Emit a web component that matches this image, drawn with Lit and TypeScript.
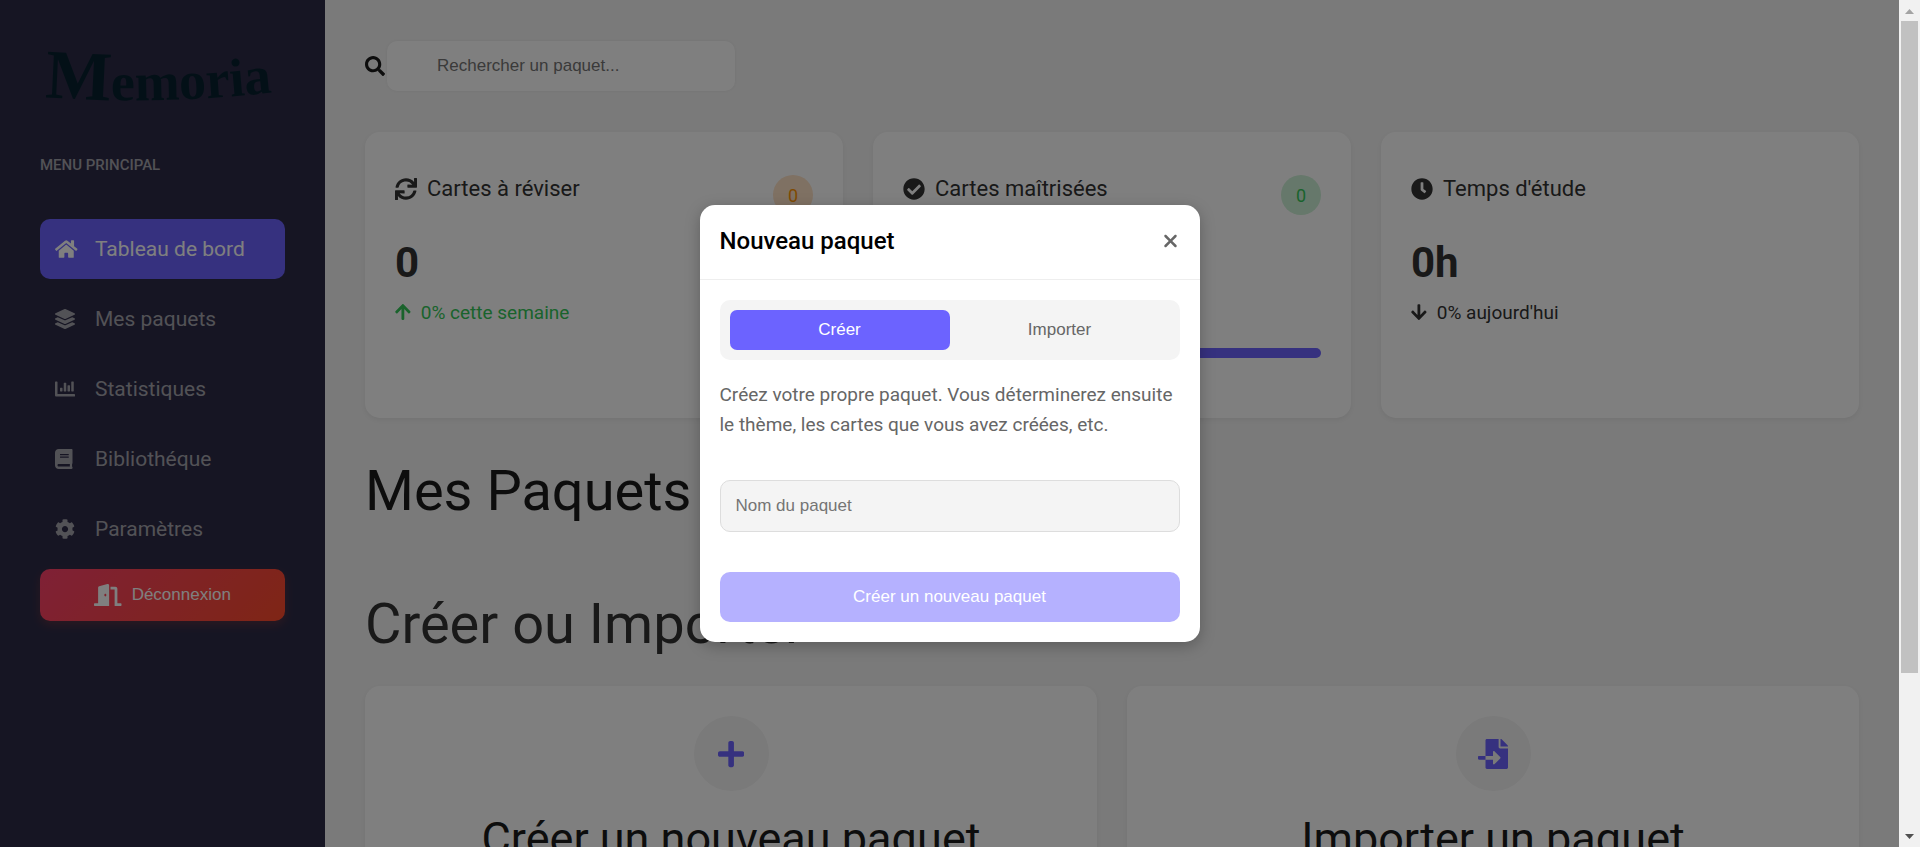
import { LitElement, html, svg, css } from "lit";
import { customElement, property, state } from "lit/decorators.js";
import { classMap } from "lit/directives/class-map.js";

interface Glyph {
  w: number;
  d: string;
}

const GLYPHS: Record<string, Glyph> = {
  home: { w: 576, d: "M280.37 148.26L96 300.11V464a16 16 0 0 0 16 16l112.06-.29a16 16 0 0 0 15.92-16V368a16 16 0 0 1 16-16h64a16 16 0 0 1 16 16v95.64a16 16 0 0 0 16 16.05L464 480a16 16 0 0 0 16-16V300L295.67 148.26a12.19 12.19 0 0 0-15.3 0zM571.6 251.47L488 182.56V44.05a12 12 0 0 0-12-12h-56a12 12 0 0 0-12 12v72.61L318.47 43a48 48 0 0 0-61 0L4.34 251.47a12 12 0 0 0-1.6 16.9l25.5 31A12 12 0 0 0 45.15 301l235.22-193.74a12.19 12.19 0 0 1 15.3 0L530.9 301a12 12 0 0 0 16.9-1.6l25.5-31a12 12 0 0 0-1.7-16.93z" },
  layers: { w: 512, d: "M12.41 148.02l232.94 105.67c6.8 3.09 14.49 3.09 21.29 0l232.94-105.67c16.55-7.51 16.55-32.52 0-40.03L266.65 2.31a25.607 25.607 0 0 0-21.29 0L12.41 107.98c-16.55 7.51-16.55 32.53 0 40.04zm487.18 88.28l-58.09-26.33-161.64 73.27c-7.56 3.43-15.59 5.17-23.86 5.17s-16.29-1.74-23.86-5.17L70.51 209.97l-58.1 26.33c-16.55 7.5-16.55 32.5 0 40l232.94 105.59c6.8 3.08 14.49 3.08 21.29 0L499.59 276.3c16.55-7.5 16.55-32.5 0-40zm0 127.8l-57.87-26.23-161.86 73.37c-7.56 3.43-15.59 5.17-23.86 5.17s-16.29-1.74-23.86-5.17L70.29 337.87 12.41 364.1c-16.55 7.5-16.55 32.5 0 40l232.94 105.59c6.8 3.08 14.49 3.08 21.29 0L499.59 404.1c16.55-7.5 16.55-32.5 0-40z" },
  chart: { w: 512, d: "M332.8 320h38.4c6.4 0 12.8-6.4 12.8-12.8V172.8c0-6.4-6.4-12.8-12.8-12.8h-38.4c-6.4 0-12.8 6.4-12.8 12.8v134.4c0 6.4 6.4 12.8 12.8 12.8zm96 0h38.4c6.4 0 12.8-6.4 12.8-12.8V76.8c0-6.4-6.4-12.8-12.8-12.8h-38.4c-6.4 0-12.8 6.4-12.8 12.8v230.4c0 6.4 6.4 12.8 12.8 12.8zm-288 0h38.4c6.4 0 12.8-6.4 12.8-12.8v-70.4c0-6.4-6.4-12.8-12.8-12.8h-38.4c-6.4 0-12.8 6.4-12.8 12.8v70.4c0 6.4 6.4 12.8 12.8 12.8zm96 0h38.4c6.4 0 12.8-6.4 12.8-12.8V108.8c0-6.4-6.4-12.8-12.8-12.8h-38.4c-6.4 0-12.8 6.4-12.8 12.8v198.4c0 6.4 6.4 12.8 12.8 12.8zM496 384H64V80c0-8.84-7.16-16-16-16H16C7.16 64 0 71.16 0 80v336c0 17.67 14.33 32 32 32h464c8.84 0 16-7.16 16-16v-32c0-8.84-7.16-16-16-16z" },
  book: { w: 448, d: "M448 360V24c0-13.3-10.7-24-24-24H96C43 0 0 43 0 96v320c0 53 43 96 96 96h328c13.3 0 24-10.7 24-24v-16c0-7.5-3.5-14.3-8.9-18.7-4.2-15.4-4.2-59.3 0-74.7 5.4-4.3 8.9-11.1 8.9-18.6zM128 134c0-3.3 2.7-6 6-6h212c3.3 0 6 2.7 6 6v20c0 3.3-2.7 6-6 6H134c-3.3 0-6-2.7-6-6v-20zm0 64c0-3.3 2.7-6 6-6h212c3.3 0 6 2.7 6 6v20c0 3.3-2.7 6-6 6H134c-3.3 0-6-2.7-6-6v-20zm253.4 250H96c-17.7 0-32-14.3-32-32 0-17.6 14.4-32 32-32h285.4c-1.9 17.1-1.9 46.9 0 64z" },
  cog: { w: 512, d: "M487.4 315.7l-42.6-24.6c4.3-23.2 4.3-47 0-70.2l42.6-24.6c4.9-2.8 7.1-8.6 5.5-14-11.1-35.6-30-67.8-54.7-94.6-3.8-4.1-10-5.1-14.8-2.3L380.8 110c-17.9-15.4-38.5-27.3-60.8-35.1V25.8c0-5.6-3.9-10.5-9.4-11.7-36.7-8.2-74.3-7.8-109.2 0-5.5 1.2-9.4 6.1-9.4 11.7V75c-22.2 7.9-42.8 19.8-60.8 35.1L88.7 85.5c-4.9-2.8-11-1.9-14.8 2.3-24.7 26.7-43.6 58.9-54.7 94.6-1.7 5.4.6 11.2 5.5 14L67.3 221c-4.3 23.2-4.3 47 0 70.2l-42.6 24.6c-4.9 2.8-7.1 8.6-5.5 14 11.1 35.6 30 67.8 54.7 94.6 3.8 4.1 10 5.1 14.8 2.3l42.6-24.6c17.9 15.4 38.5 27.3 60.8 35.1v49.2c0 5.6 3.9 10.5 9.4 11.7 36.7 8.2 74.3 7.8 109.2 0 5.5-1.2 9.4-6.1 9.4-11.7v-49.2c22.2-7.9 42.8-19.8 60.8-35.1l42.6 24.6c4.9 2.8 11 1.9 14.8-2.3 24.7-26.7 43.6-58.9 54.7-94.6 1.5-5.5-.7-11.3-5.6-14.1zM256 336c-44.1 0-80-35.9-80-80s35.9-80 80-80 80 35.9 80 80-35.9 80-80 80z" },
  door: { w: 640, d: "M624 448h-80V113.45C544 86.19 522.47 64 496 64H384v64h96v384h144c8.84 0 16-7.16 16-16v-32c0-8.84-7.16-16-16-16zM312.24 1.01l-192 49.74C105.99 54.44 96 67.7 96 82.92V448H16c-8.84 0-16 7.16-16 16v32c0 8.84 7.16 16 16 16h336V33.18c0-21.58-19.56-37.41-39.76-32.17zM264 288c-13.25 0-24-14.33-24-32s10.75-32 24-32 24 14.33 24 32-10.75 32-24 32z" },
  search: { w: 512, d: "M505 442.7L405.3 343c-4.5-4.5-10.6-7-17-7H372c27.6-35.3 44-79.7 44-128C416 93.1 322.9 0 208 0S0 93.1 0 208s93.1 208 208 208c48.3 0 92.7-16.4 128-44v16.3c0 6.4 2.5 12.5 7 17l99.7 99.7c9.4 9.4 24.6 9.4 33.9 0l28.3-28.3c9.4-9.4 9.4-24.6.1-34zM208 336c-70.7 0-128-57.2-128-128 0-70.7 57.2-128 128-128 70.7 0 128 57.2 128 128 0 70.7-57.2 128-128 128z" },
  sync: { w: 512, d: "M440.65 12.57l4 82.77A247.16 247.16 0 0 0 255.83 8C134.73 8 33.91 94.92 12.29 209.82A12 12 0 0 0 24.09 224h49.05a12 12 0 0 0 11.67-9.26 175.91 175.91 0 0 1 317-56.94l-101.46-4.86a12 12 0 0 0-12.57 12v47.41a12 12 0 0 0 12 12H500a12 12 0 0 0 12-12V12a12 12 0 0 0-12-12h-47.37a12 12 0 0 0-11.98 12.57zM255.83 432a175.61 175.61 0 0 1-146-77.8l101.8 4.87a12 12 0 0 0 12.57-12v-47.4a12 12 0 0 0-12-12H12a12 12 0 0 0-12 12V500a12 12 0 0 0 12 12h47.35a12 12 0 0 0 12-12.6l-4.15-82.57A247.17 247.17 0 0 0 255.83 504c121.11 0 221.93-86.92 243.55-201.82a12 12 0 0 0-11.8-14.18h-49.05a12 12 0 0 0-11.67 9.26A175.86 175.86 0 0 1 255.83 432z" },
  check: { w: 512, d: "M504 256c0 136.967-111.033 248-248 248S8 392.967 8 256 119.033 8 256 8s248 111.033 248 248zM227.314 387.314l184-184c6.248-6.248 6.248-16.379 0-22.627l-22.627-22.627c-6.248-6.249-16.379-6.249-22.628 0L216 308.118l-70.059-70.059c-6.248-6.248-16.379-6.248-22.628 0l-22.627 22.627c-6.248 6.248-6.248 16.379 0 22.627l104 104c6.249 6.249 16.379 6.249 22.628.001z" },
  clock: { w: 512, d: "M256,8C119,8,8,119,8,256S119,504,256,504,504,393,504,256,393,8,256,8Zm92.49,313h0l-20,25a16,16,0,0,1-22.49,2.5h0l-67-49.72a40,40,0,0,1-15-31.23V112a16,16,0,0,1,16-16h32a16,16,0,0,1,16,16V256l58,42.5A16,16,0,0,1,348.49,321Z" },
  up: { w: 448, d: "M34.9 289.5l-22.2-22.2c-9.4-9.4-9.4-24.6 0-33.9L207 39c9.4-9.4 24.6-9.4 33.9 0l194.3 194.3c9.4 9.4 9.4 24.6 0 33.9L413 289.4c-9.5 9.5-25 9.3-34.3-.4L264 168.6V456c0 13.3-10.7 24-24 24h-32c-13.3 0-24-10.7-24-24V168.6L69.2 289.1c-9.3 9.8-24.8 10-34.3.4z" },
  down: { w: 448, d: "M413.1 222.5l22.2 22.2c9.4 9.4 9.4 24.6 0 33.9L241 473c-9.4 9.4-24.6 9.4-33.9 0L12.7 278.6c-9.4-9.4-9.4-24.6 0-33.9l22.2-22.2c9.5-9.5 25-9.3 34.3.4L184 343.4V56c0-13.3 10.7-24 24-24h32c13.3 0 24 10.7 24 24v287.4l114.8-120.5c9.3-9.8 24.8-10 34.3-.4z" },
  plus: { w: 448, d: "M416 208H272V64c0-17.67-14.33-32-32-32h-32c-17.67 0-32 14.33-32 32v144H32c-17.67 0-32 14.33-32 32v32c0 17.67 14.33 32 32 32h144v144c0 17.67 14.33 32 32 32h32c17.67 0 32-14.33 32-32V304h144c17.67 0 32-14.33 32-32v-32c0-17.67-14.33-32-32-32z" },
  fileImport: { w: 512, d: "M16 288c-8.8 0-16 7.2-16 16v32c0 8.8 7.2 16 16 16h112v-64zm489-183L407.1 7c-4.5-4.5-10.6-7-17-7H384v128h128v-6.1c0-6.3-2.5-12.4-7-16.9zm-153 31V0H152c-13.3 0-24 10.7-24 24v264h128v-65.2c0-14.3 17.3-21.4 27.4-11.3L379 308c6.6 6.7 6.6 17.4 0 24l-95.7 96.4c-10.1 10.1-27.4 3-27.4-11.3V352H128v136c0 13.3 10.7 24 24 24h336c13.3 0 24-10.7 24-24V160H376c-13.2 0-24-10.8-24-24z" },
  times: { w: 384, d: "M342.6 150.6c12.5-12.5 12.5-32.8 0-45.3s-32.8-12.5-45.3 0L192 210.7 86.6 105.4c-12.5-12.5-32.8-12.5-45.3 0s-12.5 32.8 0 45.3L146.7 256 41.4 361.4c-12.5 12.5-12.5 32.8 0 45.3s32.8 12.5 45.3 0L192 301.3 297.4 406.6c12.5 12.5 32.8 12.5 45.3 0s12.5-32.8 0-45.3L237.3 256 342.6 150.6z" },
};

/** Monochrome icon, as tall as the surrounding font size. */
@customElement("app-icon")
export class AppIcon extends LitElement {
  @property() name = "home";

  static styles = css`
    :host {
      display: inline-flex;
      flex: none;
    }
    .glyph {
      display: block;
      height: 1em;
      fill: currentColor;
    }
  `;

  render() {
    const g = GLYPHS[this.name];
    return html`<svg class="glyph" viewBox="0 0 ${g.w} 512" aria-hidden="true">${svg`<path d=${g.d}></path>`}</svg>`;
  }
}

const base = css`
  :host,
  * {
    box-sizing: border-box;
  }
  * {
    margin: 0;
  }
  button,
  input {
    font: 17px/20px "Liberation Sans", Arial, sans-serif;
    border: none;
    outline: none;
  }
  button {
    cursor: pointer;
  }
`;

@customElement("app-sidebar")
export class AppSidebar extends LitElement {
  static styles = [
    base,
    css`
      :host {
        display: block;
        flex: none;
        width: 325px;
        padding: 40px;
        background: #2d2b47;
      }
      .logo {
        display: block;
        width: 100%;
        fill: #07212f;
        font-family: "Liberation Serif", serif;
        font-weight: 700;
      }
      .label {
        margin-top: 35px;
        font-size: 15px;
        line-height: 20px;
        font-weight: 500;
        color: #a5a4ad;
      }
      .nav {
        display: flex;
        flex-direction: column;
        gap: 10px;
        margin-top: 44px;
      }
      .link {
        display: flex;
        align-items: center;
        gap: 15px;
        height: 60px;
        padding: 0 15px;
        border-radius: 10px;
        font-size: 21px;
        color: #a5a4ad;
        text-decoration: none;
      }
      .link.active {
        background: #6c63ff;
        color: #fff;
      }
      .slot {
        display: flex;
        width: 25px;
        font-size: 20px;
      }
      .logout {
        display: flex;
        align-items: center;
        justify-content: center;
        gap: 10px;
        width: 100%;
        height: 52px;
        margin-top: 10px;
        border-radius: 10px;
        background: linear-gradient(135deg, #ff416c, #ff4b2b);
        box-shadow: 0 4px 10px rgba(255, 75, 43, 0.2);
        color: #fff;
      }
      .exit {
        font-size: 22px;
      }
    `,
  ];

  render() {
    const items = [
      ["home", "Tableau de bord"],
      ["layers", "Mes paquets"],
      ["chart", "Statistiques"],
      ["book", "Bibliothéque"],
      ["cog", "Paramètres"],
    ];
    return html`
      <svg class="logo" viewBox="0 0 245 80" role="img" aria-label="Memoria">
        <defs><path id="arc" d="M5 57 Q 120 66 245 51"></path></defs>
        <text><textPath href="#arc"><tspan font-size="70">M</tspan><tspan font-size="54">emoria</tspan></textPath></text>
      </svg>
      <p class="label">MENU PRINCIPAL</p>
      <nav class="nav">
        ${items.map(
          ([icon, text], i) => html`<a class=${classMap({ link: true, active: i === 0 })} href="#">
            <span class="slot"><app-icon name=${icon}></app-icon></span>${text}
          </a>`,
        )}
      </nav>
      <button class="logout" type="button"><app-icon class="exit" name="door"></app-icon>Déconnexion</button>
    `;
  }
}

@customElement("app-dashboard")
export class AppDashboard extends LitElement {
  static styles = [
    base,
    css`
      :host {
        display: block;
        flex: 1;
        min-width: 0;
        padding: 41px 40px;
        background: #f4f4f4;
        color: #1a1a1a;
      }
      .search {
        display: flex;
        align-items: center;
        gap: 2px;
        margin-bottom: 41px;
        font-size: 20px;
      }
      .query {
        width: 348px;
        height: 50px;
        padding: 0 20px 0 50px;
        border-radius: 10px;
        background: #fff;
        box-shadow: 0 0 3px rgba(0, 0, 0, 0.06);
      }
      .query::placeholder {
        color: #757575;
      }
      .stats {
        display: grid;
        grid-template-columns: repeat(3, 1fr);
        gap: 30px;
      }
      .card {
        padding: 30px;
        border-radius: 15px;
        background: #fff;
        box-shadow: 0 2px 5px rgba(0, 0, 0, 0.06);
        color: #333;
      }
      .head {
        display: flex;
        justify-content: space-between;
        height: 53px;
        padding-top: 13px;
      }
      .name {
        display: flex;
        align-items: center;
        gap: 10px;
        height: 27px;
        font-size: 22px;
        font-weight: 400;
      }
      .badge {
        display: grid;
        place-items: center;
        width: 40px;
        height: 40px;
        border-radius: 50%;
        font-size: 18px;
      }
      .badge.orange {
        background: #ffe2c6;
        color: #ff9500;
      }
      .badge.green {
        background: #cdf1d6;
        color: #34c759;
      }
      .value {
        margin-top: 23px;
        font-size: 42px;
        line-height: 50px;
        font-weight: 700;
      }
      .trend {
        display: flex;
        align-items: center;
        gap: 10px;
        height: 22px;
        margin-top: 13px;
        font-size: 19px;
      }
      .mark {
        font-size: 18px;
      }
      .trend.rise {
        color: #34c759;
      }
      .bar {
        height: 10px;
        margin: 60px 0 30px;
        border-radius: 5px;
        background: #6c63ff;
      }
      .title {
        margin-top: 40px;
        font-size: 56px;
        line-height: 66px;
        font-weight: 400;
      }
      .title.second {
        margin: 67px 0 29px;
        color: #333;
      }
      .actions {
        display: grid;
        grid-template-columns: repeat(2, 1fr);
        gap: 30px;
      }
      .action {
        display: flex;
        flex-direction: column;
        align-items: center;
        gap: 21px;
        color: #1a1a1a;
      }
      .disc {
        display: grid;
        place-items: center;
        width: 75px;
        height: 75px;
        border-radius: 50%;
        background: #f4f4f4;
        color: #6c63ff;
        font-size: 30px;
      }
      .caption {
        margin-bottom: 40px;
        font-size: 45px;
        line-height: 53px;
        font-weight: 400;
      }
    `,
  ];

  render() {
    return html`
      <label class="search">
        <app-icon name="search"></app-icon>
        <input class="query" type="text" placeholder="Rechercher un paquet..." aria-label="Rechercher un paquet" />
      </label>
      <section class="stats">
        <article class="card">
          <div class="head">
            <h3 class="name"><app-icon name="sync"></app-icon>Cartes à réviser</h3>
            <span class="badge orange">0</span>
          </div>
          <p class="value">0</p>
          <p class="trend rise"><app-icon class="mark" name="up"></app-icon>0% cette semaine</p>
        </article>
        <article class="card">
          <div class="head">
            <h3 class="name"><app-icon name="check"></app-icon>Cartes maîtrisées</h3>
            <span class="badge green">0</span>
          </div>
          <p class="value">0</p>
          <div class="bar"></div>
        </article>
        <article class="card">
          <div class="head">
            <h3 class="name"><app-icon name="clock"></app-icon>Temps d'étude</h3>
          </div>
          <p class="value">0h</p>
          <p class="trend"><app-icon class="mark" name="down"></app-icon>0% aujourd'hui</p>
        </article>
      </section>
      <h1 class="title">Mes Paquets</h1>
      <h1 class="title second">Créer ou Importer</h1>
      <section class="actions">
        <article class="card action">
          <span class="disc"><app-icon name="plus"></app-icon></span>
          <h2 class="caption">Créer un nouveau paquet</h2>
        </article>
        <article class="card action">
          <span class="disc"><app-icon name="fileImport"></app-icon></span>
          <h2 class="caption">Importer un paquet</h2>
        </article>
      </section>
    `;
  }
}

@customElement("deck-dialog")
export class DeckDialog extends LitElement {
  @state() private tab = "Créer";

  static styles = [
    base,
    css`
      :host {
        display: block;
        width: 500px;
        border-radius: 15px;
        background: #fff;
        box-shadow: 0 4px 15px rgba(0, 0, 0, 0.25);
      }
      .head {
        display: flex;
        align-items: center;
        justify-content: space-between;
        height: 75px;
        padding: 0 20px 2px;
        border-bottom: 1px solid #eee;
      }
      .title {
        font-size: 24px;
        line-height: 30px;
        font-weight: 500;
        color: #000;
      }
      .close {
        display: flex;
        padding: 2px;
        background: none;
        color: #666;
        font-size: 20px;
      }
      .body {
        display: flex;
        flex-direction: column;
        padding: 20px;
      }
      .tabs {
        display: grid;
        grid-template-columns: 1fr 1fr;
        padding: 10px;
        border-radius: 10px;
        background: #f4f4f4;
      }
      .tab {
        height: 40px;
        border-radius: 7px;
        background: none;
        color: #666;
      }
      .tab.active {
        background: #6c63ff;
        color: #fff;
      }
      .text {
        margin: 20px 0 40px;
        font-size: 19px;
        line-height: 30px;
        color: #666;
      }
      .field {
        width: 100%;
        height: 52px;
        padding: 0 15px;
        border: 1px solid #ddd;
        border-radius: 10px;
        background: #f4f4f4;
      }
      .field::placeholder {
        color: #757575;
      }
      .submit {
        height: 50px;
        margin-top: 40px;
        border-radius: 10px;
        background: #b5b1ff;
        color: #fff;
      }
    `,
  ];

  render() {
    return html`
      <header class="head">
        <h2 class="title">Nouveau paquet</h2>
        <button class="close" type="button" aria-label="Fermer"><app-icon name="times"></app-icon></button>
      </header>
      <form class="body">
        <div class="tabs">
          ${["Créer", "Importer"].map(
            (t) => html`<button type="button" class=${classMap({ tab: true, active: t === this.tab })} @click=${() => (this.tab = t)}>${t}</button>`,
          )}
        </div>
        <p class="text">Créez votre propre paquet. Vous déterminerez ensuite le thème, les cartes que vous avez créées, etc.</p>
        <input class="field" type="text" placeholder="Nom du paquet" aria-label="Nom du paquet" />
        <button class="submit" type="button">Créer un nouveau paquet</button>
      </form>
    `;
  }
}

@customElement("app-root")
export class AppRoot extends LitElement {
  static styles = css`
    :host {
      display: flex;
      height: 100vh;
      overflow: hidden;
      font-family: Roboto, sans-serif;
    }
    .page {
      position: relative;
      display: flex;
      flex: 1;
      min-width: 0;
      overflow: hidden;
    }
    .overlay {
      position: absolute;
      inset: 0;
      display: flex;
      align-items: center;
      justify-content: center;
      background: rgba(0, 0, 0, 0.5);
    }
    .track {
      display: flex;
      flex-direction: column;
      align-items: center;
      width: 21px;
      background: #f1f1f1;
    }
    .cap {
      display: block;
      flex: none;
      width: 21px;
      height: 21px;
      fill: #a3a3a3;
    }
    .cap.end {
      fill: #505050;
    }
    .rail {
      flex: 1;
      width: 17px;
    }
    .thumb {
      height: 81%;
      background: #c1c1c1;
    }
  `;

  render() {
    return html`
      <div class="page">
        <app-sidebar></app-sidebar>
        <app-dashboard></app-dashboard>
        <div class="overlay"><deck-dialog role="dialog" aria-modal="true" aria-label="Nouveau paquet"></deck-dialog></div>
      </div>
      <div class="track" aria-hidden="true">
        <svg class="cap" viewBox="0 0 21 21"><path d="M6 14l4.500-5 4.500 5z"></path></svg>
        <div class="rail"><div class="thumb"></div></div>
        <svg class="cap end" viewBox="0 0 21 21"><path d="M6 8h9l-4.500 5z"></path></svg>
      </div>
    `;
  }
}
